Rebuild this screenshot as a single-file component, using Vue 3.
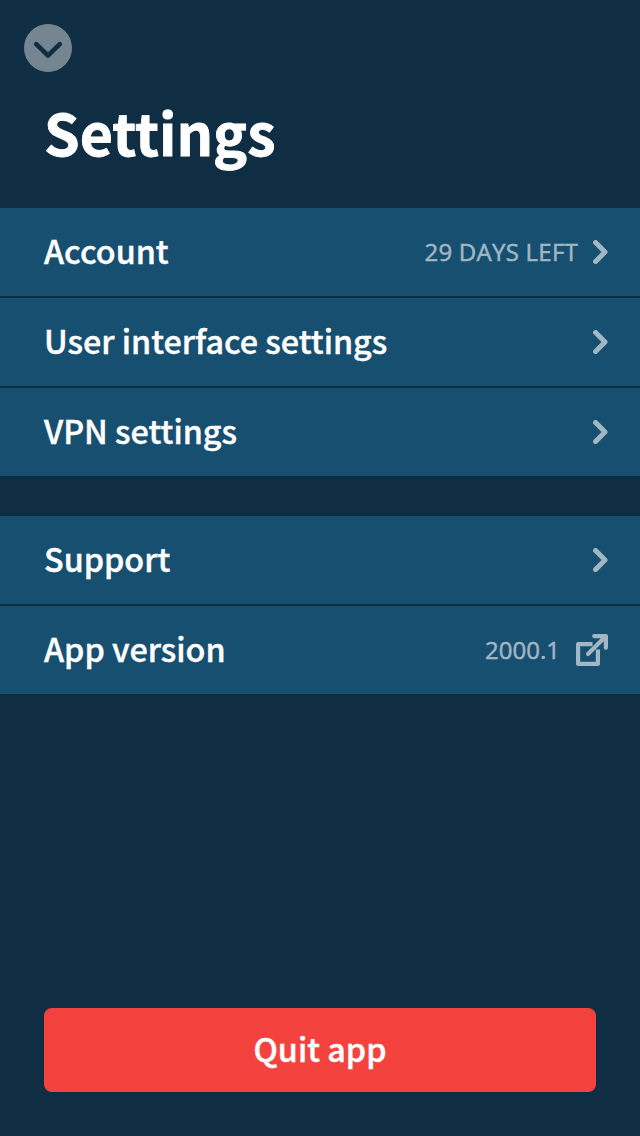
<script setup>
const groups = [
  [
    { label: 'Account', sub: '29 DAYS LEFT' },
    { label: 'User interface settings' },
    { label: 'VPN settings' }
  ],
  [
    { label: 'Support' },
    { label: 'App version', sub: '2000.1', external: true }
  ]
]
</script>

<template>
  <main class="screen">
    <header class="bar">
      <button class="close" aria-label="Close">
        <svg width="48" height="48" viewBox="0 0 48 48">
          <circle cx="24" cy="24" r="24" fill="#758591" />
          <path d="M12.2 20.2l11.8 11.3 11.8-11.3" fill="none" stroke="#102e43" stroke-width="4.6" stroke-linecap="round" stroke-linejoin="round" />
        </svg>
      </button>
    </header>
    <h1 class="title">Settings</h1>
    <nav v-for="(group, i) in groups" :key="i" class="group">
      <div v-for="item in group" :key="item.label" class="row">
        <span class="label">{{ item.label }}</span>
        <span v-if="item.sub" class="sub" :class="{ number: item.external }">{{ item.sub }}</span>
        <svg v-if="item.external" class="icon" width="32" height="32" viewBox="0 0 32 32" fill="none" stroke="#a2b6c4" stroke-width="4.2" stroke-linejoin="round">
          <path d="M16.5 10.1H2.1v19.8h19.8V15.5" />
          <path d="M18.2 2.1h11.7v11.7M29 3L12 20" stroke-linecap="round" />
        </svg>
        <svg v-else class="icon" width="15" height="24" viewBox="0 0 15 24" fill="none" stroke="#a2b6c4" stroke-width="5">
          <path d="M2.6 2.5L12 12L2.6 21.5" stroke-linecap="round" stroke-linejoin="round" />
        </svg>
      </div>
    </nav>
    <button class="quit"><span class="caption">Quit app</span></button>
  </main>
</template>

<style>
body { background: #102e43; }
</style>

<style scoped>
.screen {
  box-sizing: border-box;
  height: 1136px;
  display: flex;
  flex-direction: column;
  background: #102e43;
  color: #fff;
  font-family: "Noto Sans CJK SC", "Open Sans", sans-serif;
}
.bar { padding: 24px 24px 0; height: 48px; }
.close { display: block; padding: 0; border: 0; background: none; }
.close svg { display: block; }
.title { margin: 19px 44px 37px; height: 80px; font-size: 57.2px; line-height: 80px; font-weight: 700; -webkit-text-stroke: 0.8px #fff; }
.group { display: flex; flex-direction: column; gap: 2px; margin-bottom: 40px; }
.row {
  box-sizing: border-box;
  height: 88px;
  padding: 0 32px 0 44px;
  display: flex;
  align-items: center;
  background: #174f71;
}
.label { flex: 1; font-size: 32.3px; line-height: 48px; font-weight: 500; padding-bottom: 4px; -webkit-text-stroke: 0.4px #fff; }
.sub {
  margin-right: 15px;
  padding-bottom: 2px;
  font-family: "Open Sans", sans-serif;
  font-size: 24px;
  font-weight: 500;
  letter-spacing: 0.25px;
  color: #a2b6c4;
  -webkit-text-stroke: 0.5px #a2b6c4;
}
.number { margin-right: 16px; letter-spacing: 0; }
.icon { display: block; flex: none; }
.quit {
  margin: auto 44px 44px;
  height: 84px;
  flex: none;
  border: 0;
  border-radius: 8px;
  background: #f4433f;
  color: #fff;
  font: 500 32.3px/48px "Noto Sans CJK SC", sans-serif;
  -webkit-text-stroke: 0.4px #fff;
}
.caption { display: block; padding-bottom: 4px; }
</style>
